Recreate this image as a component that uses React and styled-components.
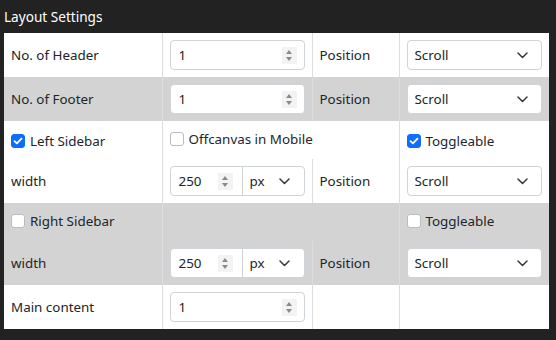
import React from "react";
import styled, { createGlobalStyle } from "styled-components";

const GlobalStyle = createGlobalStyle`
  html, body { margin: 0; padding: 0; background: #222222; }
  body { font-family: "Noto Sans", "Open Sans", sans-serif; font-size: 13.4px; color: #212529; }
`;

const Panel = styled.div`
  width: 545px;
  padding-left: 4px;
`;

const Title = styled.div`
  height: 33px;
  display: flex;
  align-items: center;
  color: #ffffff;
  font-size: 13.6px;
  padding-bottom: 1px;
  box-sizing: border-box;
`;

const Table = styled.table`
  width: 545px;
  table-layout: fixed;
  border-collapse: collapse;
  background: #ffffff;
`;

const Row = styled.tr`
  height: ${(p) => p.$h}px;
  background: ${(p) => (p.$shade ? "#d3d3d3" : "#ffffff")};
  & + & > td { border-top: 1px dotted #bdbdbd; }
`;

const Cell = styled.td`
  padding: 0 7px 0 7px;
  border-left: 1px solid #dddddd;
  vertical-align: middle;
  white-space: nowrap;
  &:first-child { border-left: none; }
`;

const Field = styled.div`
  height: 30px;
  box-sizing: border-box;
  border: 1px solid #ced4da;
  border-radius: 4px;
  background: #ffffff;
  display: flex;
  align-items: center;
  overflow: hidden;
`;

const Part = styled.div`
  flex: ${(p) => (p.$grow ? 1 : "none")};
  width: ${(p) => (p.$w ? `${p.$w}px` : "auto")};
  height: 100%;
  display: flex;
  align-items: center;
  padding: 0 ${(p) => p.$pr ?? 6}px 0 ${(p) => p.$pl ?? 8}px;
  box-sizing: border-box;
  & + & { border-left: 1px solid #ced4da; }
`;

const Value = styled.span`
  flex: 1;
  color: #212529;
`;

const SpinBox = styled.span`
  width: 15px;
  height: 17px;
  background: #f3f3f3;
  display: flex;
  flex-direction: column;
  align-items: center;
  justify-content: center;
  gap: 3px;
`;

const Tri = styled.span`
  width: 0;
  height: 0;
  border-left: 3.5px solid transparent;
  border-right: 3.5px solid transparent;
  ${(p) => (p.$down ? "border-top: 4px solid #8a8a8a;" : "border-bottom: 4px solid #8a8a8a;")}
`;

const Spinner = () => (
  <SpinBox>
    <Tri />
    <Tri $down />
  </SpinBox>
);

const Chevron = () => (
  <svg width="11" height="7" viewBox="0 0 11 7" style={{ flex: "none" }}>
    <polyline points="1,1 5.5,5.5 10,1" fill="none" stroke="#343a40" strokeWidth="1.5" strokeLinecap="round" strokeLinejoin="round" />
  </svg>
);

const NumberField = ({ value }) => (
  <Field>
    <Part $grow $pl={8} $pr={7}>
      <Value>{value}</Value>
      <Spinner />
    </Part>
  </Field>
);

const SelectField = ({ value }) => (
  <Field>
    <Part $grow $pl={7} $pr={13}>
      <Value>{value}</Value>
      <Chevron />
    </Part>
  </Field>
);

const UnitField = ({ value, unit }) => (
  <Field>
    <Part $w={71} $pl={8} $pr={9}>
      <Value>{value}</Value>
      <Spinner />
    </Part>
    <Part $grow $pl={7} $pr={14}>
      <Value>{unit}</Value>
      <Chevron />
    </Part>
  </Field>
);

const CheckLabel = styled.label`
  display: inline-flex;
  align-items: center;
  gap: 5px;
  color: #212529;
`;

const Box = styled.span`
  width: 14px;
  height: 14px;
  box-sizing: border-box;
  border-radius: 3px;
  border: 1px solid ${(p) => (p.$on ? "#0d6efd" : "#b9bdc2")};
  background: ${(p) => (p.$on ? "#0d6efd" : "#ffffff")};
  display: flex;
  align-items: center;
  justify-content: center;
`;

const Check = ({ on, children }) => (
  <CheckLabel>
    <Box $on={on}>
      {on && (
        <svg width="10" height="8" viewBox="0 0 10 8">
          <polyline points="1.5,4.2 3.9,6.4 8.5,1.6" fill="none" stroke="#fff" strokeWidth="1.8" strokeLinecap="round" strokeLinejoin="round" />
        </svg>
      )}
    </Box>
    {children}
  </CheckLabel>
);

export default function App() {
  return (
    <>
      <GlobalStyle />
      <Panel>
        <Title>Layout Settings</Title>
        <Table>
          <colgroup>
            <col style={{ width: 158 }} />
            <col style={{ width: 150 }} />
            <col style={{ width: 87 }} />
            <col style={{ width: 150 }} />
          </colgroup>
          <tbody>
            <Row $h={44}>
              <Cell>No. of Header</Cell>
              <Cell><NumberField value="1" /></Cell>
              <Cell>Position</Cell>
              <Cell><SelectField value="Scroll" /></Cell>
            </Row>
            <Row $h={44} $shade>
              <Cell>No. of Footer</Cell>
              <Cell><NumberField value="1" /></Cell>
              <Cell>Position</Cell>
              <Cell><SelectField value="Scroll" /></Cell>
            </Row>
            <Row $h={38}>
              <Cell><Check on>Left Sidebar</Check></Cell>
              <Cell colSpan={2}><Check>Offcanvas in Mobile</Check></Cell>
              <Cell><Check on>Toggleable</Check></Cell>
            </Row>
            <Row $h={44}>
              <Cell>width</Cell>
              <Cell><UnitField value="250" unit="px" /></Cell>
              <Cell>Position</Cell>
              <Cell><SelectField value="Scroll" /></Cell>
            </Row>
            <Row $h={38} $shade>
              <Cell><Check>Right Sidebar</Check></Cell>
              <Cell colSpan={2}></Cell>
              <Cell><Check>Toggleable</Check></Cell>
            </Row>
            <Row $h={44} $shade>
              <Cell>width</Cell>
              <Cell><UnitField value="250" unit="px" /></Cell>
              <Cell>Position</Cell>
              <Cell><SelectField value="Scroll" /></Cell>
            </Row>
            <Row $h={44}>
              <Cell>Main content</Cell>
              <Cell><NumberField value="1" /></Cell>
              <Cell></Cell>
              <Cell></Cell>
            </Row>
          </tbody>
        </Table>
      </Panel>
    </>
  );
}
